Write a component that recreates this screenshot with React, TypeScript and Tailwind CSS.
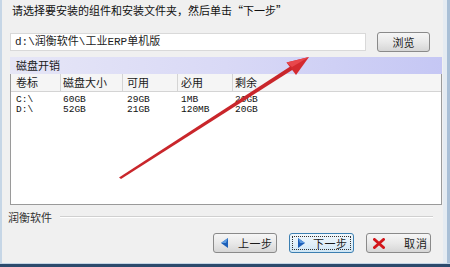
import React from "react";

const cjk = "font-['Noto_Sans_CJK_SC',sans-serif]";
const mono = "font-['Liberation_Mono','Noto_Sans_CJK_SC',monospace]";

const rows = [
  ["C:\\", "60GB", "29GB", "1MB", "20GB"],
  ["D:\\", "52GB", "21GB", "120MB", "20GB"],
];

const headers = ["卷标", "磁盘大小", "可用", "必用", "剩余"];
const colPad = ["pl-[5px]", "pl-[2px]", "pl-[4px]", "pl-[3px]", "pl-[2px]"];
const grid = "grid grid-cols-[50px_62px_55px_55px_1fr]";

function WinButton({
  children,
  focused = false,
  className = "",
}: {
  children: React.ReactNode;
  focused?: boolean;
  className?: string;
}) {
  return (
    <button
      type="button"
      className={`relative flex items-center rounded-[3px] border text-[11px] text-[#1a1a1a] ${
        focused
          ? "border-[#3c7fb1] bg-gradient-to-b from-[#f0f7fc] via-[#e2f0f9] to-[#cfe6f5]"
          : "border-[#8a8a8a] bg-gradient-to-b from-[#f6f6f6] via-[#e9e9e9] to-[#d6d6d6]"
      } ${className}`}
    >
      {focused && (
        <span className="pointer-events-none absolute inset-[2px] border border-dotted border-[#333]" />
      )}
      {children}
    </button>
  );
}

export default function App() {
  return (
    <div className={`relative flex h-[267px] w-[450px] flex-col overflow-hidden bg-[#f0f0f0] ${cjk}`}>
      <div className="flex h-[263px]">
        {/* main content */}
        <div className="flex flex-1 flex-col border-l-2 border-l-[#c6d6e6]">
          {/* Title */}
          <p className="pl-[10px] pt-[3px] text-[11px] leading-[15px] text-[#111]">
            请选择要安装的组件和安装文件夹，然后单击“下一步”
          </p>

          {/* Path + browse */}
          <div className="mt-[14px] flex h-[20px] items-center pl-[8px]">
            <div
              className={`flex h-[18px] w-[356px] items-center border border-[#d9d9d9] bg-white pl-[4px] text-[11px] text-[#222] ${mono}`}
            >
              d:\润衡软件\工业ERP单机版
            </div>
            <WinButton className="ml-[11px] h-[20px] w-[53px] justify-center">浏览</WinButton>
          </div>

          {/* Disk cost bar */}
          <div className="ml-[8px] mr-[1px] mt-[5px] flex h-[17px] items-center bg-gradient-to-r from-[#e6e6f6] via-[#d9d9f6] to-[#c5c7f4] pl-[6px] text-[11px] text-[#1a1a1a]">
            磁盘开销
          </div>

          {/* List */}
          <div className="ml-[8px] mr-[1px] flex h-[131px] flex-col border-x border-b border-[#9a9a9a] bg-white">
            <div className={`${grid} h-[18px] border-b border-[#d4d4d4] bg-[#f5f5f5] text-[11px] text-[#1a1a1a]`}>
              {headers.map((h, i) => (
                <div
                  key={h}
                  className={`flex items-center ${colPad[i]} ${i < 4 ? "border-r border-[#d4d4d4]" : ""}`}
                >
                  {h}
                </div>
              ))}
            </div>
            <div className={`pt-[3px] text-[9.5px] text-[#111] ${mono}`}>
              {rows.map((r) => (
                <div key={r[0]} className={`${grid} h-[10px] leading-[10px]`}>
                  {r.map((c, i) => (
                    <div key={i} className={colPad[i]}>
                      {c}
                    </div>
                  ))}
                </div>
              ))}
            </div>
          </div>

          {/* Group label */}
          <div className="mt-[5px] flex h-[14px] items-center pl-[6px]">
            <span className="text-[11px] leading-[14px] text-[#333]">润衡软件</span>
            <div className="ml-[8px] mr-[10px] flex-1 border-t border-b border-t-[#d0d0d0] border-b-white" />
          </div>

          {/* Buttons */}
          <div className="mr-[12px] mt-[9px] flex justify-end gap-[12px]">
            <WinButton className="h-[20px] w-[64px] pl-[7px]">
              <svg width="8" height="10" viewBox="0 0 8 10">
                <polygon points="0,5 7,0 7,10" fill="#1c5fb8" />
                <polygon points="0,5 7,0 5,5" fill="#5d9be0" />
              </svg>
              <span className="ml-[9px] tracking-[0.5px]">上一步</span>
            </WinButton>
            <WinButton focused className="h-[20px] w-[65px] pl-[7px]">
              <svg width="8" height="10" viewBox="0 0 8 10">
                <polygon points="8,5 1,0 1,10" fill="#1c5fb8" />
                <polygon points="8,5 1,0 3,5" fill="#5d9be0" />
              </svg>
              <span className="ml-[8px] tracking-[0.5px]">下一步</span>
            </WinButton>
            <WinButton className="h-[20px] w-[65px] pl-[6px]">
              <svg width="12" height="11" viewBox="0 0 12 11">
                <path d="M1.5 1.5 L10.5 9.5 M10.5 1.5 L1.5 9.5" stroke="#d3161b" strokeWidth="3" strokeLinecap="round" />
              </svg>
              <span className="ml-[19px] tracking-[1px]">取消</span>
            </WinButton>
          </div>
        </div>

        {/* right window frame */}
        <div className="flex w-[7px]">
          <div className="w-[4px] bg-[#e4ebf2]" />
          <div className="w-[3px] bg-[#a9bfd6]" />
        </div>
      </div>

      {/* bottom window frame */}
      <div className="flex h-[4px] flex-col">
        <div className="h-[1px] bg-[#c4d4e4]" />
        <div className="h-[3px] bg-[#2c4a6c]" />
      </div>

      {/* red annotation arrow */}
      <svg className="pointer-events-none absolute left-0 top-0" width="450" height="267" viewBox="0 0 450 267">
        <polygon points="119,177.5 121,179 293,69.5 291,66" fill="#c9262b" />
        <polygon points="309,57 286.5,62.5 296,75" fill="#d42a2f" />
        <polygon points="309,57 286.5,62.5 292,67" fill="#e8474c" />
      </svg>
    </div>
  );
}
